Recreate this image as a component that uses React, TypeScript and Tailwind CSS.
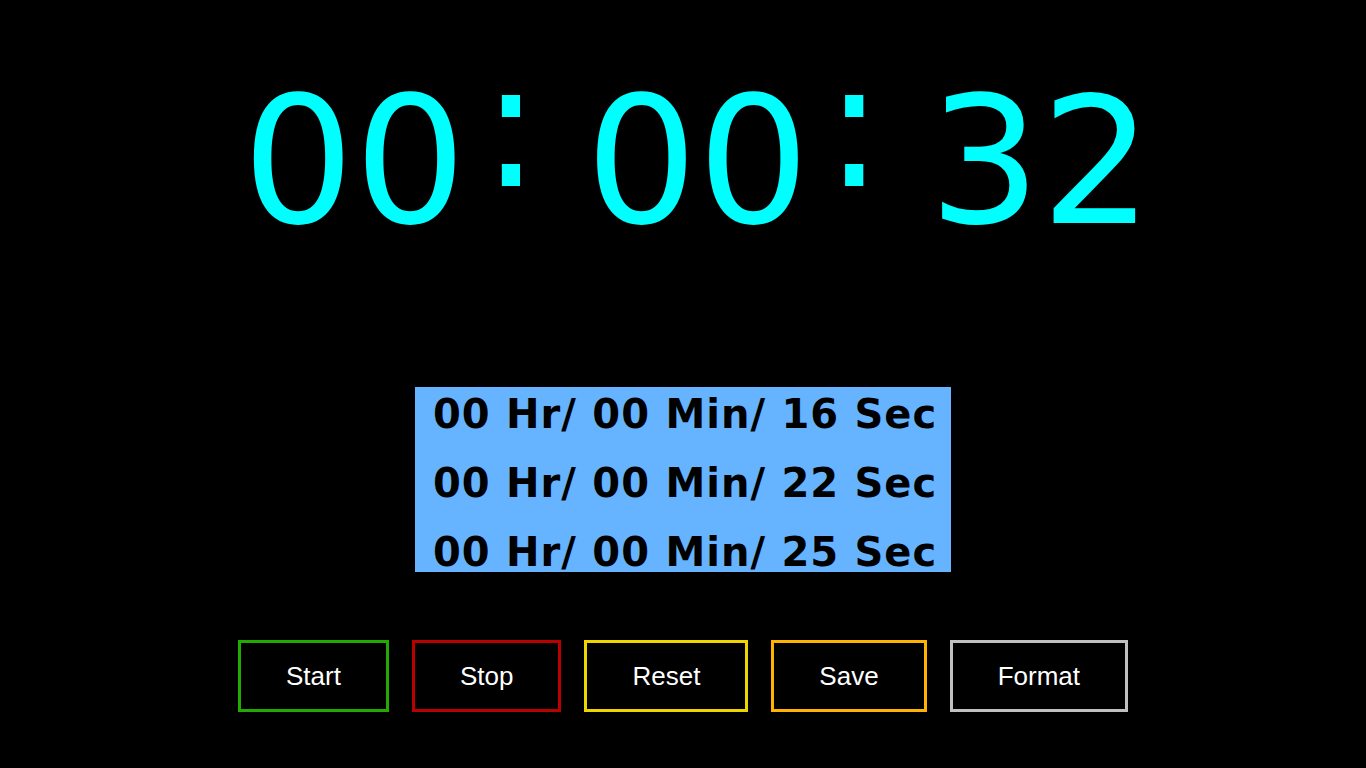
import React from "react";

const rows = ["00 Hr/ 00 Min/ 16 Sec", "00 Hr/ 00 Min/ 22 Sec", "00 Hr/ 00 Min/ 25 Sec"];

const buttons = [
  { label: "Start", cls: "border-[#22aa00]" },
  { label: "Stop", cls: "border-[#bb0000]" },
  { label: "Reset", cls: "border-[#eed500]" },
  { label: "Save", cls: "border-[#ffb300]" },
  { label: "Format", cls: "border-[#c0c0c0]" },
];

export default function App() {
  return (
    <div className="w-[1366px] h-[768px] bg-black overflow-hidden flex flex-col items-center">
      <div
        className="mt-[75px] ml-[29px] flex items-start h-[176px] text-[176px] leading-none text-[#00ffff] whitespace-nowrap"
        style={{ fontFamily: '"DejaVu Sans", sans-serif' }}
      >
        <span>00</span>
        <span className="ml-[15px] -mt-[37px]">:</span>
        <span className="ml-[45px]">00</span>
        <span className="ml-[15px] -mt-[37px]">:</span>
        <span className="ml-[45px]">32</span>
      </div>

      <div className="mt-[136px] w-[536px] h-[185px] bg-[#66b3ff] overflow-hidden">
        <div
          className="-mt-[7px] pl-[18px] text-[40px] font-bold text-black leading-[69px] whitespace-nowrap tracking-[1px] [word-spacing:0.5px]"
          style={{ fontFamily: '"DejaVu Sans", sans-serif' }}
        >
          {rows.map((r) => (
            <div key={r}>{r}</div>
          ))}
        </div>
      </div>

      <div className="mt-[68px] flex gap-[23px]">
        {buttons.map((b) => (
          <button
            key={b.label}
            className={`h-[72px] px-[45px] border-[3px] bg-black text-white text-[26px] leading-none ${b.cls}`}
            style={{ fontFamily: '"Liberation Sans", Arial, sans-serif' }}
          >
            {b.label}
          </button>
        ))}
      </div>
    </div>
  );
}
